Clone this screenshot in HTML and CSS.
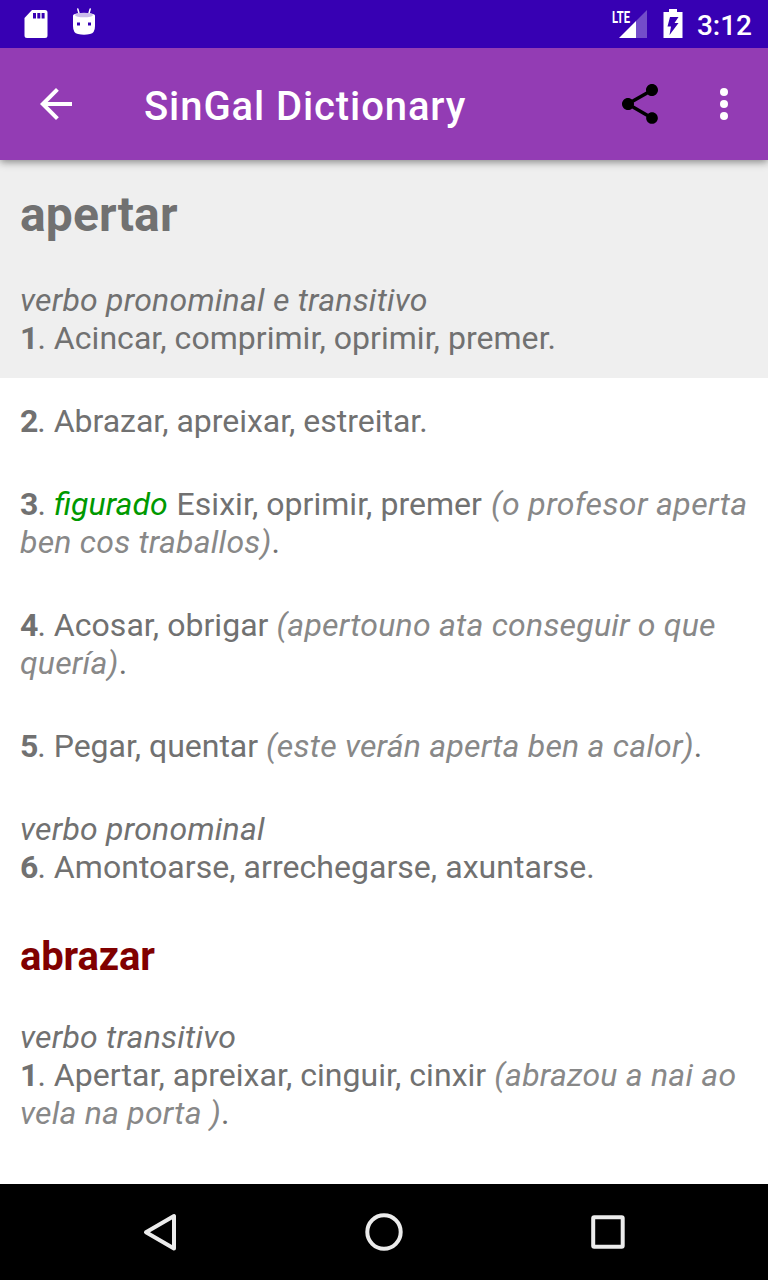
FILE: index.html
```html
<!DOCTYPE html>
<html lang="gl">
<head>
<meta charset="utf-8">
<title>SinGal Dictionary</title>
<link rel="stylesheet" href="styles.css">
</head>
<body>
<div class="screen">
  <div class="status">
    <svg class="sd" width="24" height="28" viewBox="0 0 24 28"><path fill="#fff" fill-rule="evenodd" d="M8 0h13a2.500 2.500 0 0 1 2.500 2.500v23a2.500 2.500 0 0 1-2.500 2.500H3a2.500 2.500 0 0 1-2.500-2.500V8zM9 3v5.500h3V3zM13.300 3v5.500h3V3zM17.600 3v5.500h3V3z"/></svg>
    <svg class="droid" width="24" height="28" viewBox="0 0 24 28"><path fill="none" stroke="#fff" stroke-width="1.500" stroke-linecap="round" d="M5.800 1l1.400 5M18.200 1l-1.400 5"/><path fill="#fff" fill-rule="evenodd" d="M1 7.500Q1 5 12 5t11 2.500V18q0 7-5 8-6 1.500-12 0-5-1-5-8zM5 14.500v3h3v-3zM16 14.500v3h3v-3z"/><ellipse cx="12" cy="7" rx="9" ry="2.300" fill="#cbbcea"/></svg>
    <span class="spacer"></span>
    <svg class="signal" width="36" height="38" viewBox="0 -4 36 38"><path fill="#fff" opacity=".3" d="M35 1v28H24V12z"/><path fill="#fff" d="M24 12v17H7z"/><text class="lte" x="0" y="14" textLength="18" lengthAdjust="spacingAndGlyphs">LTE</text></svg>
    <svg class="battery" width="20" height="30" viewBox="0 0 20 30"><path fill="#fff" fill-rule="evenodd" d="M6 0h8v3h5.500v26H.500V3H6zM7 8L4.500 17.500H8L6.500 26l9-12h-4l4-6z"/></svg>
    <span class="clock">3:12</span>
  </div>
  <header class="appbar">
    <svg class="back" width="48" height="48" viewBox="0 0 24 24"><path fill="#fff" d="M20 11H7.830l5.590-5.590L12 4l-8 8 8 8 1.410-1.410L7.830 13H20z"/></svg>
    <h1 class="title">SinGal Dictionary</h1>
    <svg class="share" width="48" height="48" viewBox="0 0 24 24"><path d="M18 16.080c-.76 0-1.440.3-1.960.77L8.910 12.700c.05-.23.09-.46.09-.7s-.04-.47-.09-.7l7.050-4.110c.54.5 1.250.81 2.040.81 1.660 0 3-1.340 3-3s-1.340-3-3-3-3 1.340-3 3c0 .24.04.47.09.7L8.040 9.810C7.500 9.310 6.790 9 6 9c-1.660 0-3 1.340-3 3s1.340 3 3 3c.79 0 1.500-.31 2.040-.81l7.120 4.160c-.05.21-.08.43-.08.65 0 1.610 1.310 2.920 2.920 2.920s2.920-1.310 2.920-2.920-1.310-2.920-2.920-2.920z"/></svg>
    <svg class="more" width="48" height="48" viewBox="0 0 24 24"><g fill="#fff"><circle cx="12" cy="6" r="2"/><circle cx="12" cy="12" r="2"/><circle cx="12" cy="18" r="2"/></g></svg>
  </header>
  <main class="content">
    <section class="selected">
      <h2 class="word">apertar</h2>
      <p class="def"><i>verbo pronominal e transitivo</i><br><b>1</b>. Acincar, comprimir, oprimir, premer.</p>
    </section>
    <section class="entries">
      <p class="def tight"><b>2</b>. Abrazar, apreixar, estreitar.</p>
      <p class="def"><b>3</b>. <i class="tag">figurado</i> Esixir, oprimir, premer <i class="example"><span class="loose">(o profesor aperta</span><br>ben cos traballos)</i>.</p>
      <p class="def"><b>4</b>. Acosar, obrigar <i class="example">(apertouno ata conseguir o que<br>quería)</i>.</p>
      <p class="def tight"><b>5</b>. Pegar, quentar <i class="example">(este verán aperta ben a calor)</i>.</p>
      <p class="def"><i>verbo pronominal</i><br><b>6</b>. Amontoarse, arrechegarse, axuntarse.</p>
      <h3 class="related">abrazar</h3>
      <p class="def"><i>verbo transitivo</i><br><b>1</b>. Apertar, apreixar, cinguir, cinxir <i class="example">(abrazou a nai ao<br>vela na porta )</i>.</p>
    </section>
  </main>
  <nav class="nav">
    <svg width="48" height="48" viewBox="0 0 48 48"><path d="M38 8v32.500L10 24.200z"/></svg>
    <svg width="48" height="48" viewBox="0 0 48 48"><circle cx="24" cy="24" r="16.700"/></svg>
    <svg width="48" height="48" viewBox="0 0 48 48"><rect x="9.200" y="9.200" width="29.500" height="29.500" rx="1"/></svg>
  </nav>
</div>
</body>
</html>
```
FILE: styles.css
```css
* { box-sizing: border-box; margin: 0; padding: 0; }
body { font-family: Roboto, sans-serif; color: #717171; background: #fff; }
svg { display: block; flex: none; }
.screen { width: 768px; height: 1280px; display: flex; flex-direction: column; overflow: hidden; }
.status { height: 48px; flex: none; background: #3700b3; display: flex; align-items: center; padding: 0 16px 0 24px; color: #fff; }
.droid { margin: 0 0 4px 24px; }
.spacer { flex: 1; }
.signal { overflow: visible; }
.lte { font: bold 17px Roboto, sans-serif; fill: #fff; }
.battery { margin: 0 14px 0 15px; }
.clock { font-size: 28px; font-weight: 500; padding-top: 2px; }
.appbar { height: 112px; flex: none; background: #933cb4; display: flex; align-items: center; padding: 0 20px 0 32px; box-shadow: 0 2px 8px rgba(0,0,0,.45); clip-path: inset(0 0 -12px 0); z-index: 1; }
.title { flex: 1; margin-left: 64px; padding-top: 4px; color: #fff; font-size: 40px; font-weight: 500; letter-spacing: .9px; }
.more { margin-left: 36px; }
.content { flex: 1; }
.selected { height: 218px; background: #efefef; padding: 27px 20px 0; }
.word { font-size: 48px; line-height: 56px; letter-spacing: .1px; margin-bottom: 38px; }
.def { font-size: 32px; line-height: 38px; white-space: nowrap; letter-spacing: .04px; }
.tight { letter-spacing: -.02px; }
.def b { margin-right: -1px; }
.def i { letter-spacing: .22px; }
.entries { padding: 24px 20px 0; }
.entries .def { margin-bottom: 45px; }
.example { color: #888; }
.loose { letter-spacing: .38px; margin-left: 1px; }
.def .tag { color: #090; letter-spacing: 0; margin-right: 1px; }
.related { color: #800000; font-size: 40px; line-height: 48px; letter-spacing: -.15px; padding-top: 2px; margin-bottom: 37px; }
.nav { height: 96px; flex: none; background: #000; display: flex; align-items: center; justify-content: center; gap: 176px; }
.nav svg { fill: none; stroke: #ececec; stroke-width: 4; stroke-linejoin: round; }
```
